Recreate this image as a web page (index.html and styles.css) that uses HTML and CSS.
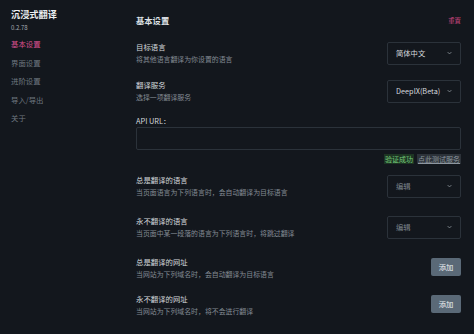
FILE: index.html
```html
<!DOCTYPE html>
<html lang="zh-CN">
<head>
    <meta charset="UTF-8">
    <title>沉浸式翻译 设置</title>
    <link rel="stylesheet" href="styles.css">
</head>
<body>
    <aside class="sidebar">
        <div class="brand">沉浸式翻译</div>
        <div class="version">0.2.78</div>
        <nav class="nav">
            <a class="nav-item active">基本设置</a>
            <a class="nav-item">界面设置</a>
            <a class="nav-item">进阶设置</a>
            <a class="nav-item">导入/导出</a>
            <a class="nav-item">关于</a>
        </nav>
    </aside>

    <main class="main">
        <div class="head">
            <h2 class="title">基本设置</h2>
            <a class="reset">重置</a>
        </div>

        <div class="row row-1">
            <div class="text">
                <div class="label">目标语言</div>
                <div class="desc">将其他语言翻译为你设置的语言</div>
            </div>
            <div class="select">简体中文<svg class="chev" viewBox="0 0 8 5"><path d="M1 1l3 3 3-3" /></svg></div>
        </div>

        <div class="row row-2">
            <div class="text">
                <div class="label">翻译服务</div>
                <div class="desc">选择一项翻译服务</div>
            </div>
            <div class="select">DeeplX(Beta)<svg class="chev" viewBox="0 0 8 5"><path d="M1 1l3 3 3-3" /></svg></div>
        </div>

        <div class="field">
            <div class="label">API URL：</div>
            <div class="input"></div>
            <div class="verify"><span class="ok">验证成功</span><a class="test">点此测试服务</a></div>
        </div>

        <div class="row row-3">
            <div class="text">
                <div class="label">总是翻译的语言</div>
                <div class="desc">当页面语言为下列语言时，会自动翻译为目标语言</div>
            </div>
            <div class="select muted">编辑<svg class="chev" viewBox="0 0 8 5"><path d="M1 1l3 3 3-3" /></svg></div>
        </div>

        <div class="row row-4">
            <div class="text">
                <div class="label">永不翻译的语言</div>
                <div class="desc">当页面中某一段落的语言为下列语言时，将跳过翻译</div>
            </div>
            <div class="select muted">编辑<svg class="chev" viewBox="0 0 8 5"><path d="M1 1l3 3 3-3" /></svg></div>
        </div>

        <div class="row row-5">
            <div class="text">
                <div class="label">总是翻译的网址</div>
                <div class="desc">当网站为下列域名时，会自动翻译为目标语言</div>
            </div>
            <button class="btn">添加</button>
        </div>

        <div class="row row-6">
            <div class="text">
                <div class="label">永不翻译的网址</div>
                <div class="desc">当网站为下列域名时，将不会进行翻译</div>
            </div>
            <button class="btn">添加</button>
        </div>
    </main>
</body>
</html>
```

FILE: styles.css
```css
body {
    margin: 0;
    background: #13171d;
    font-family: "Noto Sans CJK SC", "Noto Sans", sans-serif;
    color: #c9ced4;
    display: flex;
    height: 334px;
    overflow: hidden;
}
.sidebar {
    width: 125px;
    padding: 7px 0 0 11px;
}
.brand {
    font-size: 9.2px;
    font-weight: bold;
    color: #eef0f2;
    line-height: 14px;
}
.version {
    font-size: 6px;
    color: #a7adb4;
    line-height: 8px;
    margin-top: 3px;
}
.nav {
    margin-top: 3px;
    display: flex;
    flex-direction: column;
}
.nav-item {
    font-size: 7.4px;
    line-height: 18.5px;
    color: #6f7780;
}
.nav-item.active {
    color: #d9508f;
}
.main {
    width: 325px;
    padding-top: 14px;
}
.head {
    display: flex;
    justify-content: space-between;
    align-items: center;
    height: 12px;
}
.title {
    margin: 0;
    font-size: 8.3px;
    font-weight: bold;
    color: #dfe3e7;
}
.reset {
    font-size: 6.4px;
    color: #c8457e;
}
.row {
    display: flex;
    justify-content: space-between;
    align-items: center;
    height: 24px;
}
.row-1 { margin-top: 15px; }
.row-2 { margin-top: 14px; }
.row-3 { margin-top: 10px; }
.row-4 { margin-top: 17px; }
.row-5 { margin-top: 17px; }
.row-6 { margin-top: 13px; }
.row-5 .btn,
.row-6 .btn {
    margin-top: -3px;
}
.label {
    font-size: 7.4px;
    line-height: 12px;
    color: #d3d7dc;
}
.desc {
    font-size: 6.9px;
    line-height: 12px;
    color: #838b94;
}
.select {
    box-sizing: border-box;
    width: 74px;
    height: 23px;
    border: 1px solid #2b323a;
    border-radius: 2px;
    display: flex;
    align-items: center;
    justify-content: space-between;
    padding: 0 8px 0 8px;
    font-size: 7.3px;
    color: #d6dade;
}
.select.muted {
    color: #7c848c;
}
.chev {
    width: 5px;
    height: 4px;
    fill: none;
    stroke: #8d949b;
    stroke-width: 1.3;
}
.field {
    margin-top: 13px;
}
.field .label {
    line-height: 10px;
}
.input {
    box-sizing: border-box;
    height: 23px;
    margin-top: 1px;
    border: 1px solid #2b323a;
    border-radius: 2px;
}
.verify {
    display: flex;
    justify-content: flex-end;
    margin-top: 4px;
    font-size: 7px;
    line-height: 10px;
}
.ok {
    color: #74c97a;
    background: #1d3523;
    padding: 0 1px;
    margin-right: 3px;
}
.test {
    color: #8d969f;
    background: #2c3239;
    text-decoration: underline;
    padding: 0 1px;
}
.btn {
    width: 30px;
    height: 18px;
    border: none;
    border-radius: 2px;
    background: #5a6977;
    color: #eef1f4;
    font-family: inherit;
    font-size: 7.3px;
    padding: 0;
}
```
